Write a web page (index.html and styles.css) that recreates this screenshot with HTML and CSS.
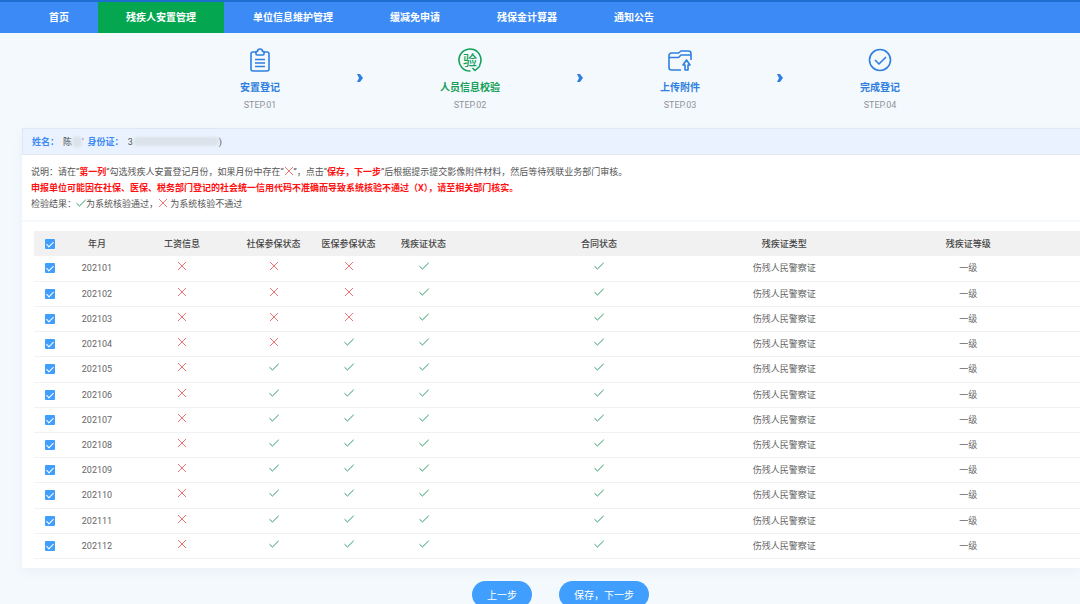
FILE: index.html
```html
<!DOCTYPE html>
<html lang="zh-CN">
<head>
<meta charset="utf-8">
<meta name="viewport" content="width=device-width, initial-scale=1">
<title>残疾人安置管理</title>
<link rel="stylesheet" href="styles.css">
</head>
<body>
<svg class="sprite" aria-hidden="true">
  <symbol id="no" viewBox="0 0 10 10"><path d="M1 1l8 8M9 1L1 9"/></symbol>
  <symbol id="ok" viewBox="0 0 10 10"><path d="M0.500 5.200L3.400 8L9.700 1.800"/></symbol>
</svg>

<nav class="nav">
  <a href="#">首页</a>
  <a href="#" class="active" aria-current="page">残疾人安置管理</a>
  <a href="#">单位信息维护管理</a>
  <a href="#">缓减免申请</a>
  <a href="#">残保金计算器</a>
  <a href="#">通知公告</a>
</nav>

<ol class="steps">
  <li class="step">
    <svg class="step-icon" viewBox="0 0 24 24"><path d="M8 4H5a2 2 0 0 0-2 2v15a2 2 0 0 0 2 2h14a2 2 0 0 0 2-2V6a2 2 0 0 0-2-2h-3M8 3.500h1.500a2.500 2.500 0 0 1 5 0H16v2.500a1 1 0 0 1-1 1H9a1 1 0 0 1-1-1zM7 11.500h10M7 15h10M7 18.500h10"/></svg>
    <span class="step-title">安置登记</span><span class="step-no">STEP.01</span>
  </li>
  <li class="arrow"><svg viewBox="0 0 6 10"><path d="M0 1h3l3 4-3 4H0l2-4z"/></svg></li>
  <li class="step current">
    <svg class="step-icon" viewBox="0 0 24 24"><path d="M12.500 23A11 11 0 1 1 21.500 17.500M14.500 20l2.500 2.500 5-4.500"/><text x="12" y="17">验</text></svg>
    <span class="step-title">人员信息校验</span><span class="step-no">STEP.02</span>
  </li>
  <li class="arrow"><svg viewBox="0 0 6 10"><path d="M0 1h3l3 4-3 4H0l2-4z"/></svg></li>
  <li class="step">
    <svg class="step-icon" viewBox="0 0 24 24"><path d="M13 22H3.500a2.500 2.500 0 0 1-2.500-2.500V7.500A2.500 2.500 0 0 1 3.500 5h7L13 3h7.500A2.500 2.500 0 0 1 23 5.500V12M1 9.500h9.500L13 7h10M17 22v-5h-2l3.500-5 3.500 5h-2v5z"/></svg>
    <span class="step-title">上传附件</span><span class="step-no">STEP.03</span>
  </li>
  <li class="arrow"><svg viewBox="0 0 6 10"><path d="M0 1h3l3 4-3 4H0l2-4z"/></svg></li>
  <li class="step">
    <svg class="step-icon" viewBox="0 0 24 24"><circle cx="12" cy="12" r="10.500"/><path d="M7 12l4 4 7-7"/></svg>
    <span class="step-title">完成登记</span><span class="step-no">STEP.04</span>
  </li>
</ol>

<main class="card">
  <div class="person">
    <b>姓名：</b><span>陈</span><i class="mask"></i><span>'</span>
    <b class="id-label">身份证：</b><span>3</span><i class="mask mask-long"></i><span>)</span>
  </div>
  <div class="notes">
    <p>说明：请在“<strong>第一列</strong>”勾选残疾人安置登记月份，如果月份中存在“<svg class="mark no"><use href="#no"/></svg>”，点击“<strong>保存，下一步</strong>”后根据提示提交影像附件材料，然后等待残联业务部门审核。</p>
    <p><strong>申报单位可能因在社保、医保、税务部门登记的社会统一信用代码不准确而导致系统核验不通过（X），请至相关部门核实。</strong></p>
    <p>检验结果：<svg class="mark ok"><use href="#ok"/></svg>为系统核验通过，<svg class="mark no"><use href="#no"/></svg> 为系统核验不通过</p>
  </div>
  <div class="table-wrap">
    <table>
      <colgroup><col class="c-check"><col class="c-month"><col class="c-wage"><col class="c-state"><col class="c-state"><col class="c-state"><col class="c-contract"><col class="c-type"><col></colgroup>
      <thead>
        <tr><th><input type="checkbox" aria-label="全选" checked></th><th>年月</th><th>工资信息</th><th>社保参保状态</th><th>医保参保状态</th><th>残疾证状态</th><th>合同状态</th><th>残疾证类型</th><th>残疾证等级</th></tr>
      </thead>
      <tbody>
        <tr><td><input type="checkbox" aria-label="202101" checked></td><td>202101</td><td><svg class="mark no"><use href="#no"/></svg></td><td><svg class="mark no"><use href="#no"/></svg></td><td><svg class="mark no"><use href="#no"/></svg></td><td><svg class="mark ok"><use href="#ok"/></svg></td><td><svg class="mark ok"><use href="#ok"/></svg></td><td>伤残人民警察证</td><td>一级</td></tr>
        <tr><td><input type="checkbox" aria-label="202102" checked></td><td>202102</td><td><svg class="mark no"><use href="#no"/></svg></td><td><svg class="mark no"><use href="#no"/></svg></td><td><svg class="mark no"><use href="#no"/></svg></td><td><svg class="mark ok"><use href="#ok"/></svg></td><td><svg class="mark ok"><use href="#ok"/></svg></td><td>伤残人民警察证</td><td>一级</td></tr>
        <tr><td><input type="checkbox" aria-label="202103" checked></td><td>202103</td><td><svg class="mark no"><use href="#no"/></svg></td><td><svg class="mark no"><use href="#no"/></svg></td><td><svg class="mark no"><use href="#no"/></svg></td><td><svg class="mark ok"><use href="#ok"/></svg></td><td><svg class="mark ok"><use href="#ok"/></svg></td><td>伤残人民警察证</td><td>一级</td></tr>
        <tr><td><input type="checkbox" aria-label="202104" checked></td><td>202104</td><td><svg class="mark no"><use href="#no"/></svg></td><td><svg class="mark no"><use href="#no"/></svg></td><td><svg class="mark ok"><use href="#ok"/></svg></td><td><svg class="mark ok"><use href="#ok"/></svg></td><td><svg class="mark ok"><use href="#ok"/></svg></td><td>伤残人民警察证</td><td>一级</td></tr>
        <tr><td><input type="checkbox" aria-label="202105" checked></td><td>202105</td><td><svg class="mark no"><use href="#no"/></svg></td><td><svg class="mark ok"><use href="#ok"/></svg></td><td><svg class="mark ok"><use href="#ok"/></svg></td><td><svg class="mark ok"><use href="#ok"/></svg></td><td><svg class="mark ok"><use href="#ok"/></svg></td><td>伤残人民警察证</td><td>一级</td></tr>
        <tr><td><input type="checkbox" aria-label="202106" checked></td><td>202106</td><td><svg class="mark no"><use href="#no"/></svg></td><td><svg class="mark ok"><use href="#ok"/></svg></td><td><svg class="mark ok"><use href="#ok"/></svg></td><td><svg class="mark ok"><use href="#ok"/></svg></td><td><svg class="mark ok"><use href="#ok"/></svg></td><td>伤残人民警察证</td><td>一级</td></tr>
        <tr><td><input type="checkbox" aria-label="202107" checked></td><td>202107</td><td><svg class="mark no"><use href="#no"/></svg></td><td><svg class="mark ok"><use href="#ok"/></svg></td><td><svg class="mark ok"><use href="#ok"/></svg></td><td><svg class="mark ok"><use href="#ok"/></svg></td><td><svg class="mark ok"><use href="#ok"/></svg></td><td>伤残人民警察证</td><td>一级</td></tr>
        <tr><td><input type="checkbox" aria-label="202108" checked></td><td>202108</td><td><svg class="mark no"><use href="#no"/></svg></td><td><svg class="mark ok"><use href="#ok"/></svg></td><td><svg class="mark ok"><use href="#ok"/></svg></td><td><svg class="mark ok"><use href="#ok"/></svg></td><td><svg class="mark ok"><use href="#ok"/></svg></td><td>伤残人民警察证</td><td>一级</td></tr>
        <tr><td><input type="checkbox" aria-label="202109" checked></td><td>202109</td><td><svg class="mark no"><use href="#no"/></svg></td><td><svg class="mark ok"><use href="#ok"/></svg></td><td><svg class="mark ok"><use href="#ok"/></svg></td><td><svg class="mark ok"><use href="#ok"/></svg></td><td><svg class="mark ok"><use href="#ok"/></svg></td><td>伤残人民警察证</td><td>一级</td></tr>
        <tr><td><input type="checkbox" aria-label="202110" checked></td><td>202110</td><td><svg class="mark no"><use href="#no"/></svg></td><td><svg class="mark ok"><use href="#ok"/></svg></td><td><svg class="mark ok"><use href="#ok"/></svg></td><td><svg class="mark ok"><use href="#ok"/></svg></td><td><svg class="mark ok"><use href="#ok"/></svg></td><td>伤残人民警察证</td><td>一级</td></tr>
        <tr><td><input type="checkbox" aria-label="202111" checked></td><td>202111</td><td><svg class="mark no"><use href="#no"/></svg></td><td><svg class="mark ok"><use href="#ok"/></svg></td><td><svg class="mark ok"><use href="#ok"/></svg></td><td><svg class="mark ok"><use href="#ok"/></svg></td><td><svg class="mark ok"><use href="#ok"/></svg></td><td>伤残人民警察证</td><td>一级</td></tr>
        <tr><td><input type="checkbox" aria-label="202112" checked></td><td>202112</td><td><svg class="mark no"><use href="#no"/></svg></td><td><svg class="mark ok"><use href="#ok"/></svg></td><td><svg class="mark ok"><use href="#ok"/></svg></td><td><svg class="mark ok"><use href="#ok"/></svg></td><td><svg class="mark ok"><use href="#ok"/></svg></td><td>伤残人民警察证</td><td>一级</td></tr>
      </tbody>
    </table>
  </div>
</main>

<div class="actions">
  <button type="button">上一步</button>
  <button type="button">保存，下一步</button>
</div>
</body>
</html>
```
FILE: styles.css
```css
* { box-sizing: border-box; }

body {
  margin: 0;
  background: #f4f9fd;
  color: #555;
  font-family: Roboto, "Noto Sans CJK SC", sans-serif;
  font-size: 9px;
  line-height: 16px;
}

.sprite { display: none; }

.nav {
  display: flex;
  gap: 1px;
  padding-left: 21px;
  background: #3c8af5;
  border-top: 2px solid #1c6fd0;
}
.nav a {
  padding: 0 28px;
  color: #fff;
  font-size: 10px;
  font-weight: 700;
  line-height: 31px;
  text-decoration: none;
  white-space: nowrap;
}
.nav .active { background: #04a650; }

.steps {
  display: flex;
  justify-content: center;
  gap: 77px;
  margin: 0;
  padding: 15px 0 15px 60px;
  list-style: none;
}
.step {
  display: flex;
  flex-direction: column;
  align-items: center;
  color: #2f7fe0;
  white-space: nowrap;
}
.step.current { color: #14a058; }
.step-icon {
  width: 24px;
  height: 24px;
  fill: none;
  stroke: currentColor;
  stroke-width: 1.6;
  stroke-linejoin: round;
}
.step-icon text {
  fill: currentColor;
  stroke: none;
  font-size: 14px;
  font-weight: 500;
  text-anchor: middle;
}
.step-title {
  margin-top: 8px;
  font-size: 10px;
  font-weight: 700;
}
.step-no { margin-top: 1px; color: #8f9398; }
.arrow { padding-top: 25px; }
.arrow svg {
  display: block;
  width: 6px;
  height: 10px;
  fill: #2f7fe0;
}

.card {
  margin-left: 22px;
  background: #fff;
  box-shadow: 0 3px 10px #e8f0f7;
}
.person {
  display: flex;
  align-items: center;
  height: 27px;
  padding-left: 9px;
  background: #e9f2fe;
  border: 1px solid #dfe7f5;
  border-right: 0;
}
.person b { margin-right: 4px; color: #3c8af5; font-weight: 700; }
.person .id-label { margin-left: 4px; }
.mask {
  width: 10px;
  height: 12px;
  border-radius: 5px;
  background: #dde3ea;
  filter: blur(1px);
}
.mask-long { width: 86px; height: 9px; }

.notes {
  padding: 9px 9px 8px;
  border-bottom: 2px solid #f7fafd;
}
.notes p { margin: 0; }
.notes strong { color: #f11; }

.mark {
  width: 10px;
  height: 10px;
  fill: none;
  stroke-width: 1;
  vertical-align: -1px;
}
.mark.no { stroke: #ee7474; }
.mark.ok { stroke: #2f9a68; }

.table-wrap { padding: 9px 0 9px 12px; }
table {
  width: 100%;
  height: 328px;
  border-collapse: collapse;
  table-layout: fixed;
}
.c-check { width: 32px; }
.c-month { width: 62px; }
.c-wage { width: 108px; }
.c-state { width: 75px; }
.c-contract { width: 26.4%; }
.c-type { width: 9%; }
th, td {
  height: 25px;
  padding: 0;
  text-align: center;
  vertical-align: middle;
  white-space: nowrap;
}
th { background: #f1f1f1; color: #444; font-weight: 500; }
td { border-bottom: 1px solid #f0f1f3; color: #666; }
th:last-child, td:last-child { padding-left: 25px; }
td .mark { vertical-align: 0; }

input[type="checkbox"] {
  display: block;
  appearance: none;
  width: 10px;
  height: 10px;
  margin: 0 auto;
  border-radius: 1px;
  background: #409eff;
}
input[type="checkbox"]:checked::after {
  content: "";
  display: block;
  width: 3px;
  height: 6px;
  margin: 1px auto;
  border: solid #fff;
  border-width: 0 1px 1px 0;
  transform: rotate(45deg);
}

.actions {
  display: flex;
  justify-content: center;
  gap: 27px;
  padding: 13px 0 0 41px;
}
button {
  height: 27px;
  padding: 0 15px;
  border: 0;
  border-radius: 14px;
  background: #409eff;
  color: #fff;
  font-family: inherit;
  font-size: 10px;
}
```
